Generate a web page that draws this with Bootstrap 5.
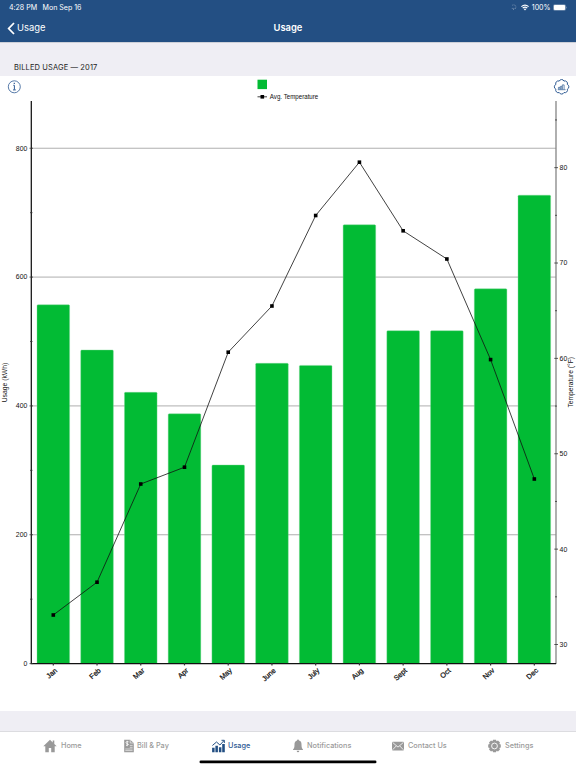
<!DOCTYPE html>
<html lang="en">
<head>
<meta charset="utf-8">
<meta name="viewport" content="width=device-width, initial-scale=1">
<title>Usage</title>
<link href="https://cdn.jsdelivr.net/npm/bootstrap@5.3.0/dist/css/bootstrap.min.css" rel="stylesheet">
<style>
body{font-family:Inter,"Liberation Sans",sans-serif;background:#efeef4;width:576px;height:768px;overflow:hidden;color:#222}
svg{display:block;flex-shrink:0}
.app-header{height:42px;background:#234f83;color:#fff;box-shadow:0 1px 0 #cdd0d8;flex-shrink:0}
.status-row{height:14px;font-size:7.1px;line-height:15px;padding:0 9px;letter-spacing:-.03px}
.status-date{margin-left:5.5px}
.battery-label{margin:0 2.5px 0 3px}
.title-row{height:28px;line-height:28px;font-size:9.4px;display:grid;grid-template-columns:1fr 1fr 1fr;padding:0 7px}
.back-label{padding-left:2px}
.page-title{font-size:9.4px;font-weight:600}
.section-label{height:34px;padding:20px 0 0 14px;font-size:7.5px;letter-spacing:.12px;line-height:12px;color:#222;flex-shrink:0}
.chart-panel{height:635px;background:#fff;flex-shrink:0}
.chart-panel text{font-family:"Liberation Sans",Arial,sans-serif;fill:#111}
.tab-strip{height:37px;margin-top:20px;border-top:1px solid #dcdce0;background:#fff;display:grid;grid-template-columns:81px 88px 81px 99px 96px 88px;padding-left:43px;color:#9b9b9b;font-size:7.3px;font-weight:500;flex-shrink:0}
.tab-strip a{color:inherit;height:27px;gap:4px}
.tab-strip span{padding-top:1px}
.tab-strip a.active{color:#2d5a94}
.tab-strip a:nth-child(2),.tab-strip a:nth-child(3){gap:3px}
</style>
<script src="https://cdn.jsdelivr.net/npm/bootstrap@5.3.0/dist/js/bootstrap.bundle.min.js"></script>
</head>
<body class="d-flex flex-column">
<header class="app-header">
  <div class="status-row d-flex justify-content-between">
    <div class="d-flex"><span>4:28 PM</span><span class="status-date">Mon Sep 16</span></div>
    <div class="d-flex align-items-center">
      <svg width="6" height="6" viewBox="0 0 6 6" fill="none" stroke="#fff" opacity=".55" stroke-width=".6"><path d="M1.2 1.4a2.2 2.2 0 0 1 3.4 2.7M.8 4.4h4M2 5.5h1.2" stroke-dasharray="1 .5"/></svg>
      <svg class="ms-1" width="8" height="7" viewBox="0 0 8 7" fill="none" stroke="#fff" stroke-width="1.2"><path d="M.4 2.6Q4 -.5 7.6 2.6M1.7 4.1Q4 2.1 6.3 4.1"/><path d="M2.7 5Q4 3.9 5.3 5L4 6.5z" fill="#fff" stroke="none"/></svg>
      <span class="battery-label">100%</span>
      <svg width="14" height="7" viewBox="0 0 14 7"><rect x=".3" y=".5" width="12.4" height="6" rx="1.5" fill="none" stroke="#fff" stroke-opacity=".5" stroke-width=".5"/><rect x=".8" y="1" width="11.4" height="5" rx="1" fill="#fff"/><path d="M13.2 2.6q.9 .9 0 1.8z" fill="#fff" opacity=".6"/></svg>
    </div>
  </div>
  <div class="title-row">
    <div class="d-flex align-items-center"><svg width="8" height="13" viewBox="0 0 8 13" fill="none" stroke="#fff" stroke-width="1.8"><path d="M7 1L1.7 6.5 7 12"/></svg><span class="back-label">Usage</span></div>
    <div class="page-title text-center">Usage</div><div></div>
  </div>
</header>
<div class="section-label">BILLED USAGE — 2017</div>
<main class="chart-panel">
<svg width="576" height="635" viewBox="0 76 576 635">
  <g fill="none" stroke="#2f5b94" stroke-width=".8">
    <circle cx="14.3" cy="86.8" r="6"/>
    <path d="M13.3 85.3h1.1v4.4M13 89.9h2.8" stroke-width="1"/><path d="M13.7 83.3h1.2" stroke-width="1.2"/>
    <path id="gear" stroke-width="1"/>
    <path d="M557.8 89.7h7.8M558.4 89.4v-2h1.5v2M560.3 89.4v-3h1.5v3M562.3 89.4v-4.5h1.8v4.5" stroke-width=".7"/>
  </g>
  <rect x="257.5" y="79.7" width="9.5" height="9.4" fill="#02bb34"/>
  <path d="M257.5 96.8h9.5" stroke="#111" stroke-width=".8"/><rect x="260.5" y="95" width="3.6" height="3.6"/>
  <text x="269.8" y="99" font-size="6.4" textLength="48.5" lengthAdjust="spacingAndGlyphs">Avg. Temperature</text>
  <g id="grid" stroke="#999" stroke-width=".8"></g>
  <path d="M556 101V664" stroke="#858585" stroke-width="1.3"/>
  <g id="bars" fill="#02bb34" stroke="#7ad894" stroke-width=".4"></g>
  <path d="M31.3 101V663.6H556" fill="none" stroke="#111" stroke-width="1.25"/>
  <g id="ticks" stroke="#333" stroke-width=".8"></g>
  <g id="trend"></g>
  <g id="labels"></g>
  <text transform="translate(7.2 402.3) rotate(-90)" font-size="6.7" textLength="39.5" lengthAdjust="spacingAndGlyphs">Usage (kWh)</text>
  <text transform="translate(572.5 407.5) rotate(-90)" font-size="6.7" textLength="50.5" lengthAdjust="spacingAndGlyphs">Temperature (°F)</text>
</svg>
</main>
<nav class="tab-strip">
  <a class="d-flex align-items-center text-decoration-none" href="#"><svg width="14" height="14" viewBox="0 0 14 14" fill="#999"><path d="M7 .7L.3 7.3h2v5.9h3.5V9h2.4v4.2h3.5V7.3h2L11.3 4.9V1.5H9.7v1.9z"/></svg><span>Home</span></a>
  <a class="d-flex align-items-center text-decoration-none" href="#"><svg width="10" height="14" viewBox="0 0 10 14"><path d="M.2 .7h6L9.8 4v9.2H.2z" fill="#999"/><path d="M6.2 .7V4h3.6M5.8 6.4h2.8M5.8 8.3h2.8M1.3 10h7.3M1.3 11.6h7.3" fill="none" stroke="#fff" stroke-width=".6"/><path d="M4.6 2.8Q1.8 2.2 2 3.5T4.1 5 2 6.5M3.2 1.8v5.4" fill="none" stroke="#fff" stroke-width=".8"/></svg><span>Bill &amp; Pay</span></a>
  <a class="active d-flex align-items-center text-decoration-none" href="#"><svg width="13" height="14" viewBox="0 0 13 14" fill="#234f83"><path d="M.1 8.7h2.5v4.6H.1zM3.4 6.8h2.5v6.5H3.4zM6.9 8.2h2.5v5.1H6.9zM10.2 5h2.6v8.3h-2.6z"/><path d="M.4 6.5L4.5 3l3.4 3L12 1.6M9.5 1.3h2.8V4" fill="none" stroke="#234f83" stroke-width="1"/></svg><span>Usage</span></a>
  <a class="d-flex align-items-center text-decoration-none" href="#"><svg width="10" height="14" viewBox="0 0 10 14" fill="#999"><path d="M4 1.5a1 1 0 0 1 2 0Q8.6 2.2 8.5 5.5C8.5 8.5 9 9.4 10 10.5v.6H0v-.6C1 9.4 1.5 8.5 1.5 5.5 1.4 2.2 4 1.5 4 1.5zM3.6 11.8h2.8q-.3 1.5-1.4 1.5t-1.4-1.5z"/></svg><span>Notifications</span></a>
  <a class="d-flex align-items-center text-decoration-none" href="#"><svg width="12" height="14" viewBox="0 0 12 14"><rect y="2.7" width="12" height="8.7" rx="1" fill="#999"/><path d="M.7 3.5L6 8.1l5.3-4.6M.7 10.7l3.6-3.8M11.3 10.7L7.7 6.9" fill="none" stroke="#fff" stroke-width=".8"/></svg><span>Contact Us</span></a>
  <a class="d-flex align-items-center text-decoration-none" href="#"><svg width="13" height="14" viewBox="0 0 13 14"><g transform="translate(6.5 7)"><path d="M-1.5-6.3h3l.5 1.5 1.5-.6 2 2-.7 1.4 1.5.5v3l-1.5.5.7 1.5-2 2L2 4.8l-.5 1.5h-3L-2 4.8l-1.5.7-2-2 .7-1.5-1.5-.5v-3l1.5-.5-.7-1.4 2-2 1.5.6z" fill="#999"/><circle r="2.9" fill="none" stroke="#fff" stroke-width=".9"/></g></svg><span>Settings</span></a>
</nav>
<div class="bg-white flex-shrink-0 position-relative z-1"><svg class="overflow-visible" width="576" height="1"><rect x="199.5" y="-7.5" width="177" height="2.8" rx="1.4"/></svg></div>
<script>
const months=['Jan','Feb','Mar','Apr','May','June','July','Aug','Sept','Oct','Nov','Dec'];
const barTop=[304.8,350,392.3,413.8,465,363.3,365.4,224.8,330.7,330.7,288.8,195.2];
const temp=[615,582.2,484,467.2,352.2,306,215.5,162.2,230.8,259,359.6,479];
const put=(id,s)=>document.getElementById(id).innerHTML=s;
const cx=i=>53.3+i*43.73;
put('bars',barTop.map((y,i)=>`<path d="M${cx(i)-16.3} 663V${y+1}q0-1 1-1h30.6q1 0 1 1V663"/>`).join(''));
let grid='',ticks='',labels='';
for(let v=0;v<=800;v+=100){
  const y=663.6-v*.6442,major=v%200===0;
  if(major&&v)grid+=`<path d="M31 ${y}H556"/>`;
  ticks+=`<path d="M${major?29.5:30} ${y}H${major?33:32.5}"/>`;
  if(major)labels+=`<text x="27.3" y="${y+2.4}" text-anchor="end" font-size="6.9">${v}</text>`;
}
for(let t=30;t<=85;t+=5){
  const y=644.5-(t-30)*9.537;
  ticks+=`<path d="M${t%10?555:554.3} ${y}H${t%10?557:558}"/>`;
  if(t%10===0)labels+=`<text x="559.6" y="${y+2.4}" font-size="6.9">${t}</text>`;
}
months.forEach((m,i)=>{
  ticks+=`<path d="M${cx(i)} 663v2.4" stroke-width="1.2"/>`;
  labels+=`<text transform="translate(${cx(i)+4.3} ${671.2}) rotate(-42)" text-anchor="end" font-size="7.2" stroke="#111" stroke-width=".25">${m}</text>`;
});
put('grid',grid);put('ticks',ticks);put('labels',labels);
put('trend',`<polyline fill="none" stroke="#111" stroke-width=".8" points="${temp.map((y,i)=>cx(i)+','+y).join(' ')}"/>`+temp.map((y,i)=>`<rect x="${cx(i)-1.8}" y="${y-1.8}" width="3.6" height="3.6"/>`).join(''));
// scalloped outline of the chart options button
let d='';
for(let k=0;k<=8;k++){const a=k*Math.PI/4+.39,x=561.6+6.2*Math.cos(a),y=86.8+6.2*Math.sin(a);d+=k?`A2.6 2.6 0 0 1 ${x} ${y}`:`M${x} ${y}`;}
document.getElementById('gear').setAttribute('d',d);
</script>
</body>
</html>
